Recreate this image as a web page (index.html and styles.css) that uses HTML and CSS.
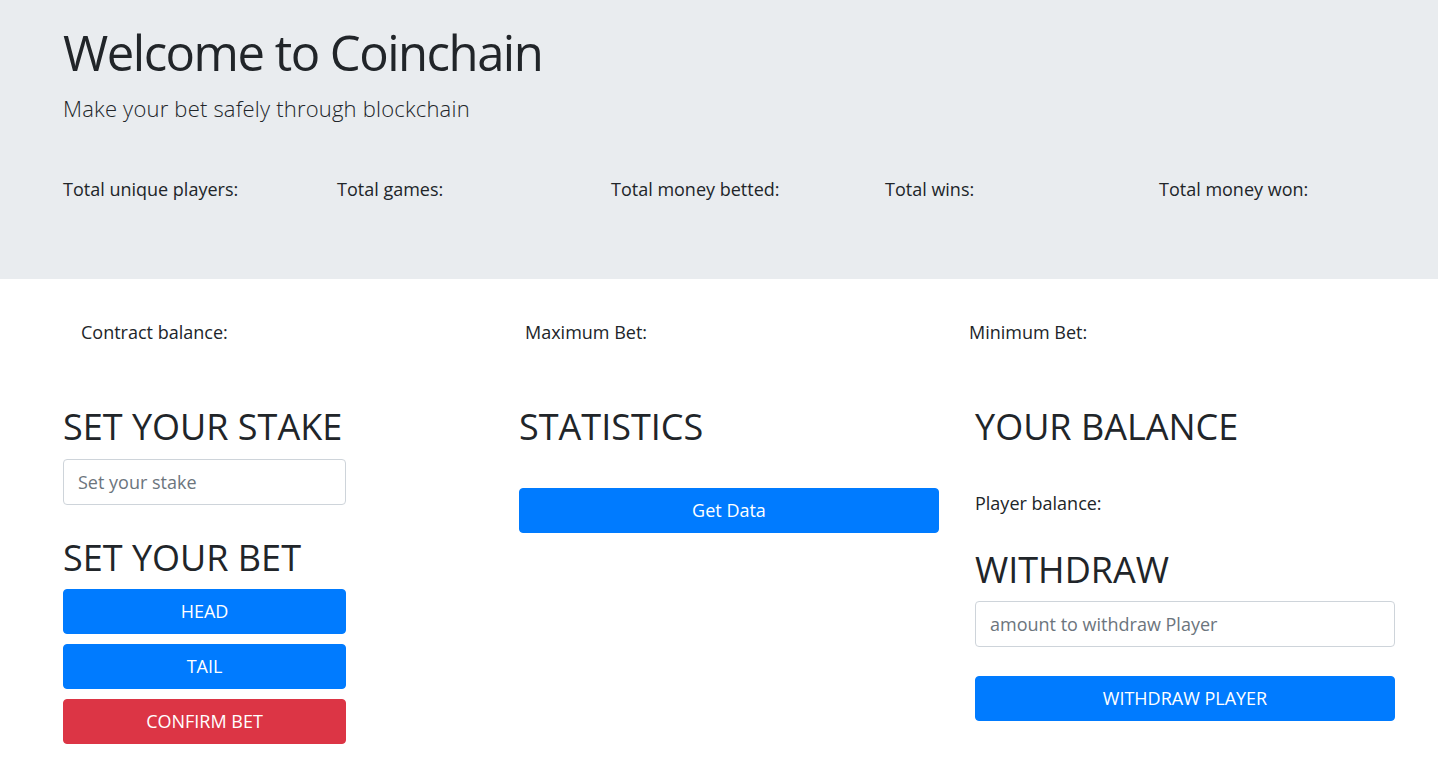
FILE: index.html
```html
<!DOCTYPE html>
<html lang="en">
<head>
<meta charset="utf-8">
<title>Coinchain</title>
<link rel="stylesheet" href="styles.css">
</head>
<body>
<header class="jumbotron">
  <h1 class="display">Welcome to Coinchain</h1>
  <p class="lead">Make your bet safely through blockchain</p>
  <div class="stats">
    <div class="stat">Total unique players:</div>
    <div class="stat">Total games:</div>
    <div class="stat">Total money betted:</div>
    <div class="stat">Total wins:</div>
    <div class="stat">Total money won:</div>
  </div>
</header>
<main class="content">
  <div class="info">
    <div class="info-item">Contract balance:</div>
    <div class="info-item">Maximum Bet:</div>
    <div class="info-item">Minimum Bet:</div>
  </div>
  <div class="panels">
    <section class="panel panel-narrow">
      <h2 class="heading">SET YOUR STAKE</h2>
      <input class="field field-stake" type="text" placeholder="Set your stake">
      <h2 class="heading heading-next">SET YOUR BET</h2>
      <div class="btn-stack">
        <button class="btn btn-primary">HEAD</button>
        <button class="btn btn-primary">TAIL</button>
        <button class="btn btn-danger">CONFIRM BET</button>
      </div>
    </section>
    <section class="panel">
      <h2 class="heading">STATISTICS</h2>
      <button class="btn btn-primary btn-data">Get Data</button>
    </section>
    <section class="panel">
      <h2 class="heading">YOUR BALANCE</h2>
      <p class="player-balance">Player balance:</p>
      <h2 class="heading heading-withdraw">WITHDRAW</h2>
      <input class="field field-withdraw" type="text" placeholder="amount to withdraw Player">
      <button class="btn btn-primary btn-withdraw">WITHDRAW PLAYER</button>
    </section>
  </div>
</main>
</body>
</html>
```
FILE: styles.css
```css
* { box-sizing: border-box; }
html, body { margin: 0; padding: 0; }
body {
  font-family: "Open Sans", "Noto Sans", sans-serif;
  font-size: 18px;
  line-height: 1.5;
  color: #212529;
  background: #fff;
}
.jumbotron {
  background: #e9ecef;
  height: 279px;
  padding: 23px 0 0 63px;
}
.display {
  margin: 0 0 10px;
  font-size: 49px;
  font-weight: 400;
  letter-spacing: -1.5px;
  line-height: 1.2;
}
.lead {
  margin: 0;
  font-size: 22px;
  font-weight: 300;
  letter-spacing: 0.2px;
  line-height: 33px;
}
.stats {
  margin-top: 51px;
  display: grid;
  grid-template-columns: repeat(5, 274px);
}
.stat { line-height: 27px; }

.content { padding-top: 40px; }
.info {
  display: grid;
  grid-template-columns: repeat(3, 444px);
  padding-left: 81px;
}
.info-item { line-height: 27px; }

.panels {
  margin-top: 59px;
  padding-left: 63px;
  display: grid;
  grid-template-columns: repeat(3, 420px);
  column-gap: 36px;
  align-items: start;
}
.panel { display: flex; flex-direction: column; align-items: stretch; }
.panel-narrow { width: 283px; }
.heading {
  margin: 0;
  font-size: 36px;
  font-weight: 400;
  line-height: 43px;
  white-space: nowrap;
}
.field {
  display: block;
  width: 100%;
  height: 46px;
  padding: 0 14px;
  font-family: inherit;
  font-size: 18px;
  color: #495057;
  background: #fff;
  border: 1px solid #ced4da;
  border-radius: 4px;
}
.field::placeholder { color: #6c757d; opacity: 1; }
.field-stake { margin-top: 11px; }
.heading-next { margin-top: 31px; }
.btn-stack { margin-top: 10px; display: flex; flex-direction: column; gap: 10px; }
.btn {
  display: block;
  width: 100%;
  height: 45px;
  padding: 0 12px;
  font-family: inherit;
  font-size: 18px;
  line-height: 27px;
  color: #fff;
  border: 1px solid transparent;
  border-radius: 4px;
  text-align: center;
}
.btn-primary { background: #007bff; border-color: #007bff; }
.btn-danger { background: #dc3545; border-color: #dc3545; }
.btn-data { margin-top: 40px; }
.player-balance { margin: 42px 0 0; line-height: 27px; }
.heading-withdraw { margin-top: 31px; }
.field-withdraw { margin-top: 10px; }
.btn-withdraw { margin-top: 29px; }
```
